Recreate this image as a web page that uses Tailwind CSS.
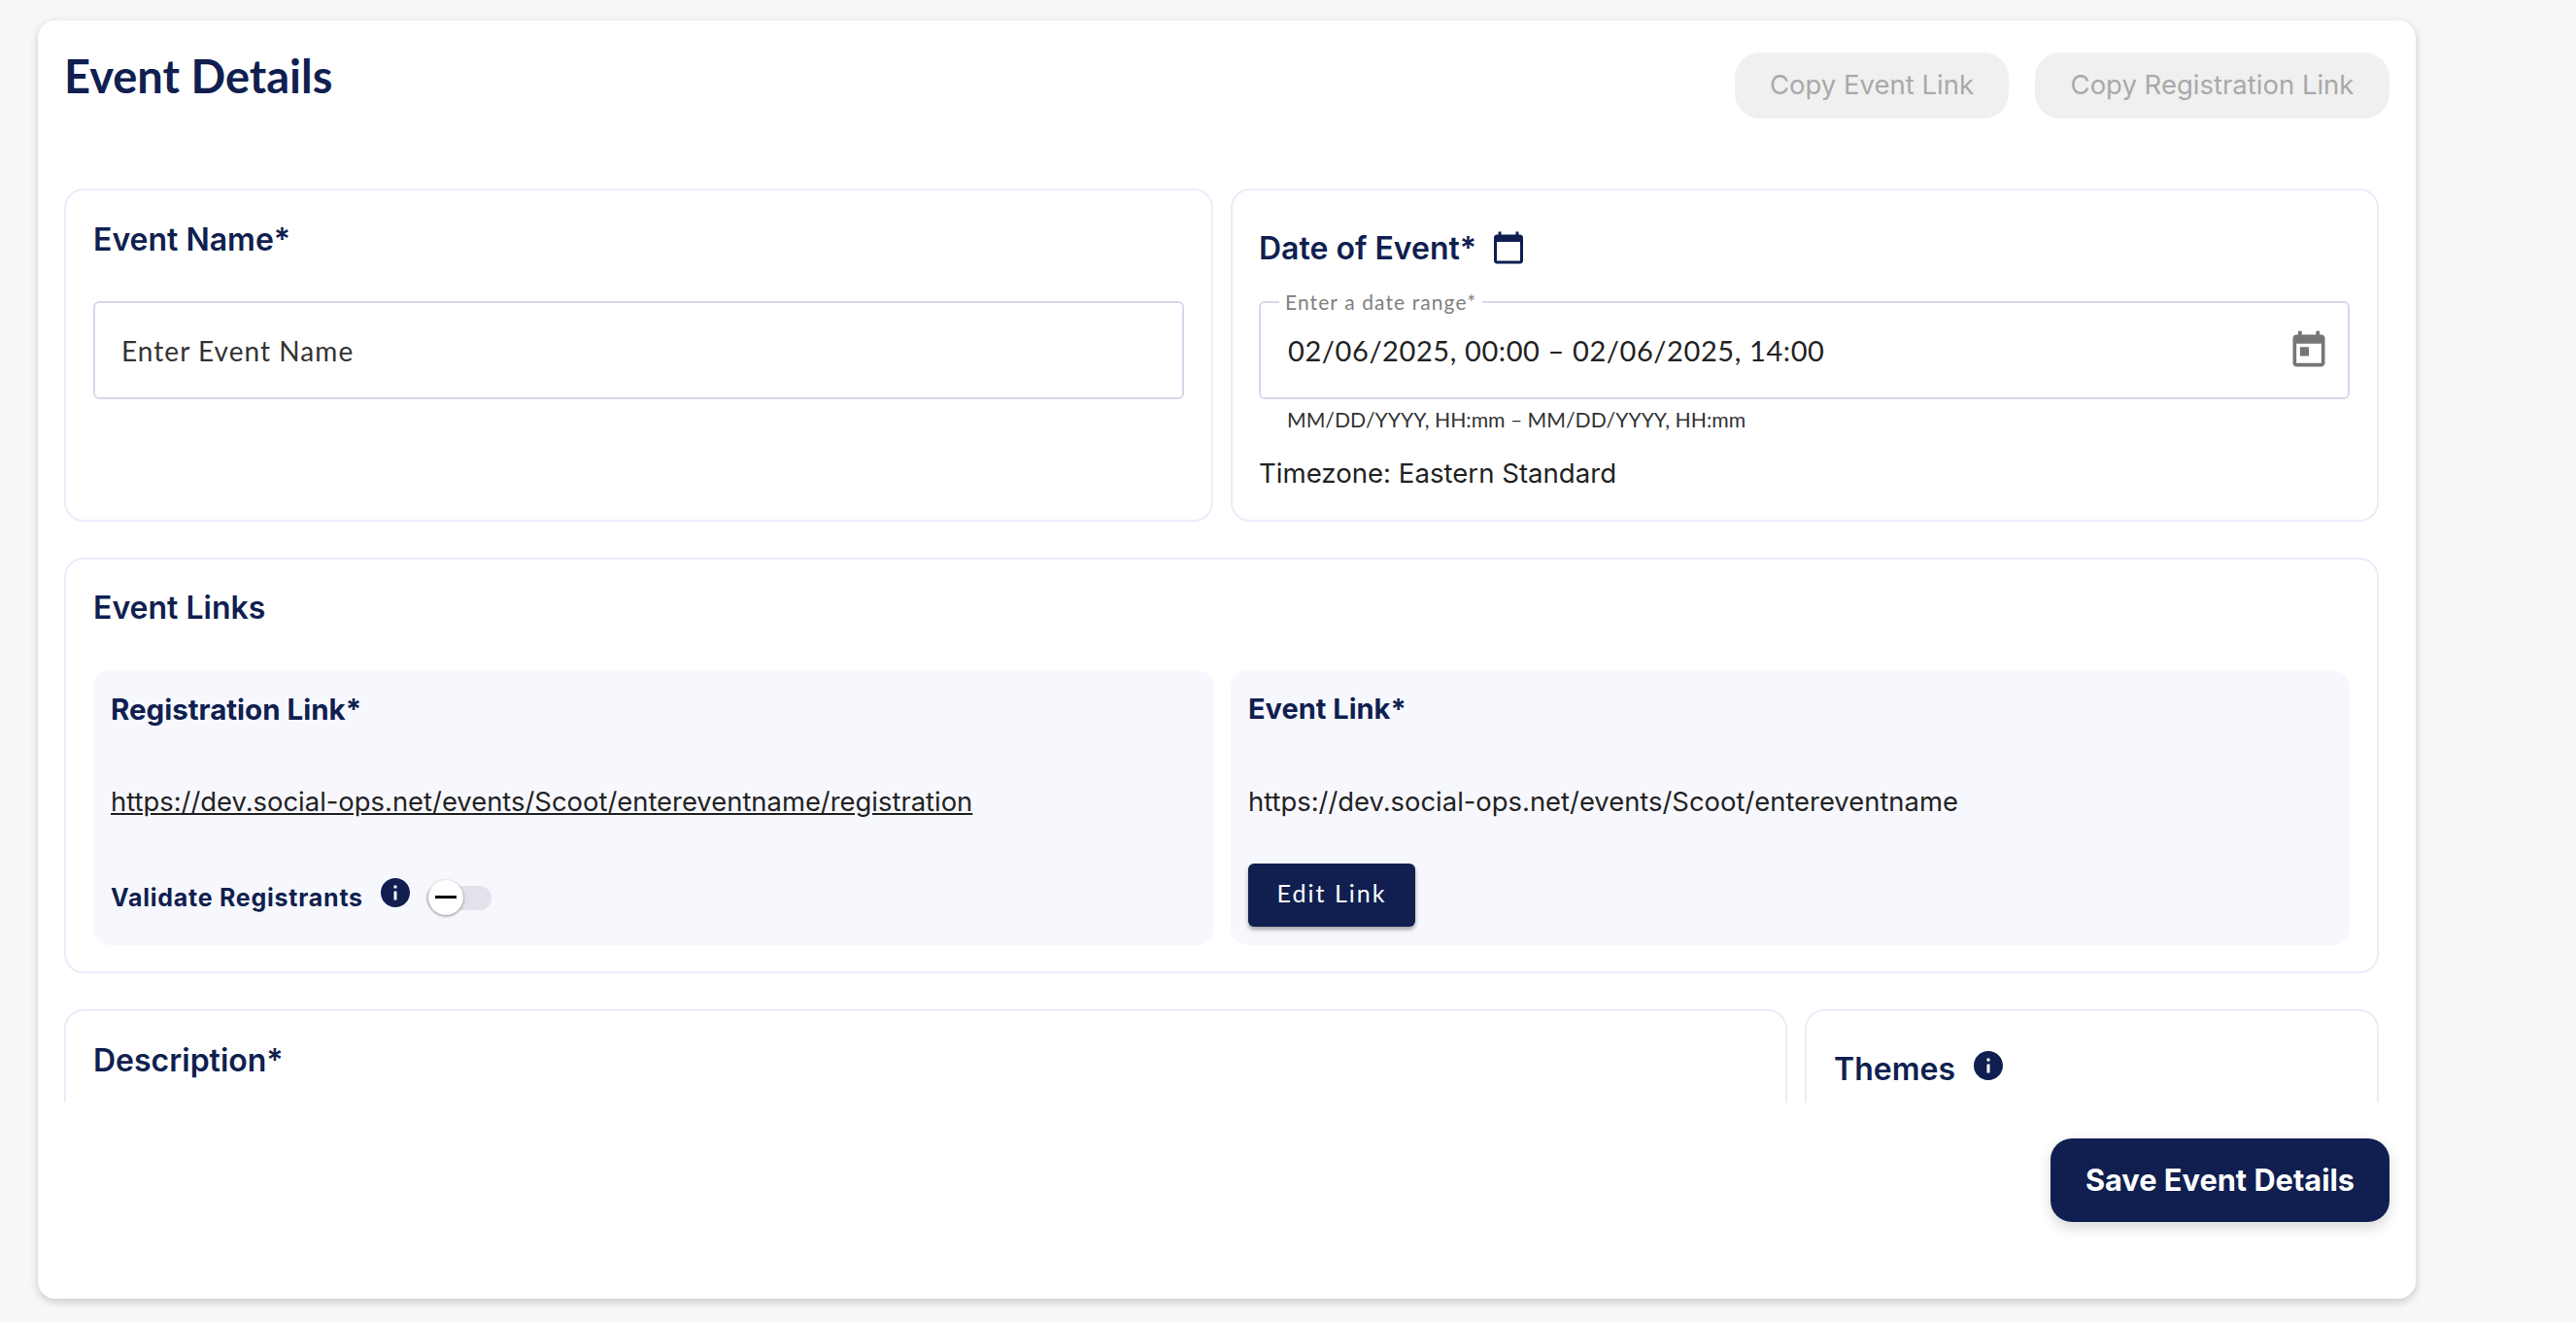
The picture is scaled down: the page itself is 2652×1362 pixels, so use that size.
<!DOCTYPE html>
<html lang="en">
<head>
  <meta charset="UTF-8" />
  <title>Event Details</title>
  <script src="https://cdn.jsdelivr.net/npm/@tailwindcss/browser@4"></script>
</head>
<body class="bg-[#f8f8f8] h-[1362px] overflow-hidden pt-[21px] pl-[39px] font-['Inter',sans-serif]">

  <div class="w-[2448px] h-[1316px] bg-white rounded-[18px] shadow-[0_3px_10px_rgba(0,0,0,0.2)] pt-[33px] px-[27px]">

    <!-- Header -->
    <div class="flex justify-between h-[68px]">
      <h1 class="font-['Lato',sans-serif] font-bold text-[47px] leading-[48px] text-[#101f50]">Event Details</h1>
      <div class="flex gap-[27px]">
        <button class="w-[282px] h-[68px] rounded-[26px] bg-[#f0f0f0] text-[#a9a9a9] text-[27.5px]">Copy Event Link</button>
        <button class="w-[365px] h-[68px] rounded-[26px] bg-[#f0f0f0] text-[#a9a9a9] text-[27.5px]">Copy Registration Link</button>
      </div>
    </div>

    <!-- Scrolling content -->
    <div class="mt-[72px] h-[941px] overflow-hidden pr-[11px] flex flex-col gap-[37px]">

      <div class="flex justify-between shrink-0">
        <!-- Event name -->
        <div class="w-[1183px] h-[343px] rounded-[20px] border-2 border-[#e9edfa] px-[28px] pt-[31px]">
          <h2 class="text-[32px] leading-[40px] font-semibold text-[#101f50]">Event Name*</h2>
          <input type="text" placeholder="Enter Event Name"
                 class="mt-[43px] w-[1123px] h-[101px] px-[27px] rounded-[6px] border-2 border-[#d5d9ea] font-['Lato',sans-serif] tracking-[1.05px] text-[28px] text-[#333] placeholder:text-[#333] outline-none" />
        </div>

        <!-- Date -->
        <div class="w-[1182px] h-[343px] rounded-[20px] border-2 border-[#e9edfa] px-[27px] pt-[40px]">
          <div class="flex items-center gap-[15px] h-[40px]">
            <h2 class="text-[32px] leading-[40px] font-semibold text-[#101f50]">Date of Event*</h2>
            <svg class="w-[36px] h-[36px] -mt-[3px]" viewBox="0 0 24 24" fill="#101f50"><path d="M20 3h-1V1h-2v2H7V1H5v2H4c-1.1 0-2 .9-2 2v16c0 1.1.9 2 2 2h16c1.1 0 2-.9 2-2V5c0-1.1-.9-2-2-2zm0 18H4V8h16v13z"/></svg>
          </div>
          <div class="relative mt-[34px] w-[1123px] h-[101px] rounded-[6px] border-2 border-[#d5d9ea] flex items-center justify-between pl-[28px] pr-[18px]">
            <span class="absolute left-[19px] -top-[13px] px-[6px] bg-white font-['Lato',sans-serif] tracking-[1.1px] text-[21px] leading-[24px] text-[#808080]">Enter a date range*</span>
            <span class="font-['Lato',sans-serif] tracking-[0.6px] text-[29px] text-[#222]">02/06/2025, 00:00 – 02/06/2025, 14:00</span>
            <svg class="w-[44px] h-[44px]" viewBox="0 0 24 24" fill="#757575"><path d="M19 3h-1V1h-2v2H8V1H6v2H5c-1.11 0-1.99.9-1.99 2L3 19c0 1.1.89 2 2 2h14c1.1 0 2-.9 2-2V5c0-1.1-.9-2-2-2zm0 16H5V8h14v11zM7 10h5v5H7z"/></svg>
          </div>
          <p class="mt-[7px] pl-[29px] font-['Lato',sans-serif] text-[21.2px] leading-[28px] text-[#333]">MM/DD/YYYY, HH:mm – MM/DD/YYYY, HH:mm</p>
          <p class="mt-[23px] text-[27.6px] leading-[36px] text-[#222]">Timezone: Eastern Standard</p>
        </div>
      </div>

      <!-- Event links -->
      <div class="shrink-0 h-[428px] rounded-[20px] border-2 border-[#e9edfa] px-[28px] pt-[31px]">
        <h2 class="text-[32px] leading-[38px] font-semibold text-[#101f50]">Event Links</h2>
        <div class="mt-[45px] flex justify-between">
          <div class="w-[1154px] h-[283px] rounded-[18px] bg-[#f7f8fd] px-[18px] pt-[22px]">
            <h3 class="text-[29.5px] leading-[36px] font-bold text-[#101f50]">Registration Link*</h3>
            <a class="block mt-[59px] text-[27.4px] leading-[36px] text-[#222] underline">https://dev.social-ops.net/events/Scoot/entereventname/registration</a>
            <div class="mt-[65px] flex items-center">
              <span class="w-[258px] text-[25px] leading-[32px] font-bold tracking-[0.75px] whitespace-nowrap text-[#101f50]">Validate Registrants</span>
              <svg class="ml-[17px] -mt-[10px] w-[36px] h-[36px]" viewBox="0 0 24 24" fill="#101f50"><path d="M12 2C6.48 2 2 6.48 2 12s4.48 10 10 10 10-4.48 10-10S17.52 2 12 2zm1 15h-2v-6h2v6zm0-8h-2V7h2v2z"/></svg>
              <div class="relative ml-[13px] w-[68px] h-[25px] rounded-full bg-[#e2e3ea]">
                <div class="absolute left-[3px] -top-[6px] w-[36px] h-[36px] rounded-full bg-white shadow-[0_1px_3px_rgba(0,0,0,0.45)] flex items-center justify-center">
                  <div class="w-[22px] h-[3px] bg-black"></div>
                </div>
              </div>
            </div>
          </div>
          <div class="w-[1152px] h-[283px] rounded-[18px] bg-[#f7f8fd] px-[18px] pt-[22px]">
            <h3 class="text-[29px] leading-[36px] font-bold text-[#101f50]">Event Link*</h3>
            <p class="mt-[59px] text-[27.4px] leading-[36px] text-[#222]">https://dev.social-ops.net/events/Scoot/entereventname</p>
            <button class="mt-[46px] w-[172px] h-[65px] pb-[3px] rounded-[6px] bg-[#101f50] text-white font-['Lato',sans-serif] tracking-[2px] text-[25px] shadow-[0_3px_4px_rgba(0,0,0,0.35)]">Edit Link</button>
          </div>
        </div>
      </div>

      <!-- Description / themes, cut off by the scroll area -->
      <div class="shrink-0 flex justify-between">
        <div class="w-[1774px] h-[400px] rounded-[20px] border-2 border-[#e9edfa] px-[28px] pt-[31px]">
          <h2 class="text-[32px] leading-[40px] font-semibold text-[#101f50]">Description*</h2>
        </div>
        <div class="w-[591px] h-[400px] rounded-[20px] border-2 border-[#e9edfa] px-[28px] pt-[40px]">
          <div class="flex items-center gap-[16px] h-[40px]">
            <h2 class="text-[32px] leading-[40px] font-semibold text-[#101f50]">Themes</h2>
            <svg class="w-[36px] h-[36px] -mt-[8px]" viewBox="0 0 24 24" fill="#101f50"><path d="M12 2C6.48 2 2 6.48 2 12s4.48 10 10 10 10-4.48 10-10S17.52 2 12 2zm1 15h-2v-6h2v6zm0-8h-2V7h2v2z"/></svg>
          </div>
        </div>
      </div>
    </div>

    <!-- Footer -->
    <div class="mt-[37px] flex justify-end">
      <button class="w-[349px] h-[86px] rounded-[22px] bg-[#101f50] text-white text-[30.75px] font-bold shadow-[0_6px_14px_rgba(0,0,0,0.15)]">Save Event Details</button>
    </div>
  </div>

</body>
</html>
